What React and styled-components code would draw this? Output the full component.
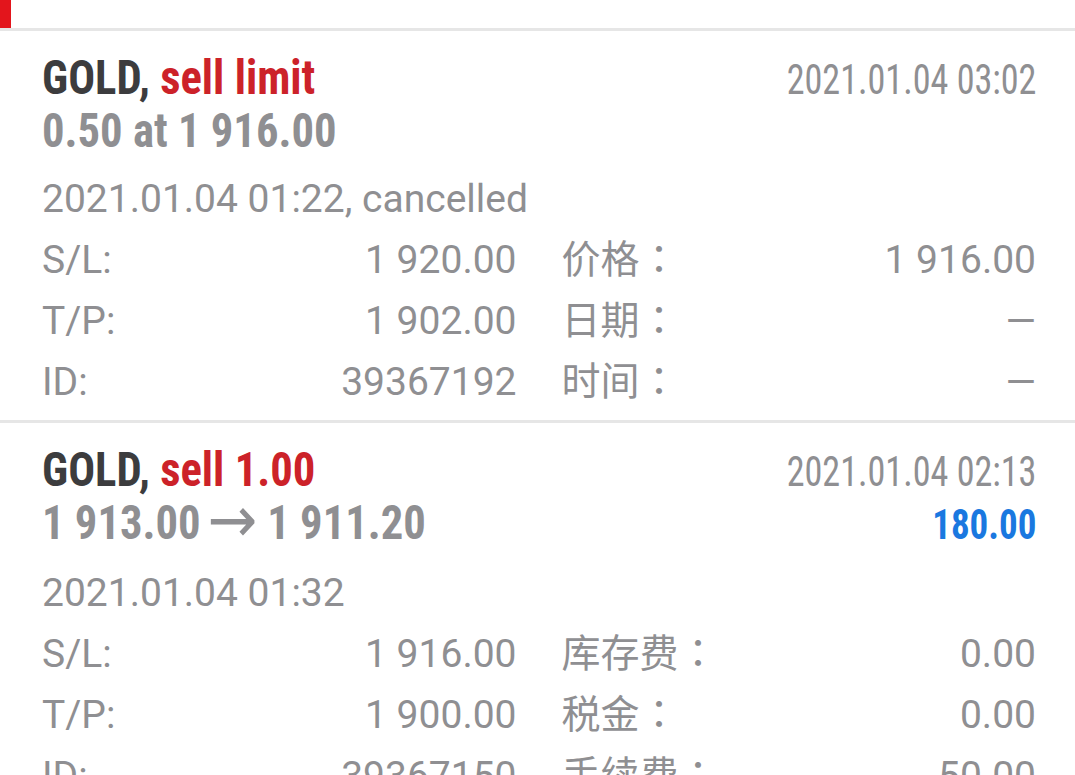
import React from 'react';
import styled, { createGlobalStyle } from 'styled-components';

const GlobalStyle = createGlobalStyle`
  html, body {
    margin: 0;
    padding: 0;
    background: #ffffff;
  }
  body {
    font-family: Roboto, "Noto Sans CJK SC", sans-serif;
    -webkit-font-smoothing: antialiased;
  }
`;

const GREY = '#8f8f92';

const Page = styled.div`
  width: 1075px;
  height: 775px;
  overflow: hidden;
  background: #fff;
`;

const TabStrip = styled.div`
  height: 28px;
  border-bottom: 3px solid #e6e6e6;
  display: flex;
`;

const TabIndicator = styled.div`
  width: 11px;
  background: #e3151c;
`;

const Card = styled.section`
  padding: 21px 39px 7px 42px;
  border-bottom: 3px solid #e6e6e6;
`;

const HeadRow = styled.div`
  display: flex;
  justify-content: space-between;
  align-items: baseline;
  line-height: 51px;
  white-space: nowrap;
`;

// the app's condensed face is narrower than Roboto Condensed, squeeze it a bit
const Condensed = styled.span`
  display: inline-block;
  font-family: "Roboto Condensed", Roboto, sans-serif;
  transform: scaleX(${(p) => p.$squeeze || 1});
  transform-origin: ${(p) => (p.$alignRight ? 'right' : 'left')} center;
`;

const Title = styled(Condensed).attrs({ $squeeze: 0.93 })`
  font-size: 48px;
  font-weight: 700;
  color: #3c3c3e;
`;

const Side = styled.span`
  color: #cc2229;
`;

const Price = styled(Condensed).attrs({ $squeeze: 0.93 })`
  font-size: 48px;
  font-weight: 700;
  color: ${GREY};
`;

const Arrow = styled.span`
  font-family: "DejaVu Sans", sans-serif;
  font-weight: 400;
  font-size: 64px;
  line-height: 0;
  margin: 0 11px 0 7px;
  vertical-align: -3px;
`;

const Stamp = styled(Condensed).attrs({ $squeeze: 0.86, $alignRight: true })`
  font-size: 42px;
  font-weight: 400;
  color: ${GREY};
`;

const Profit = styled(Condensed).attrs({ $squeeze: 0.88, $alignRight: true })`
  font-size: 42px;
  font-weight: 700;
  color: ${(p) => (p.$negative ? '#cc2229' : '#1a78e0')};
`;

const OpenTime = styled.div`
  margin-top: 13px;
  font-size: 39px;
  line-height: 61px;
  color: ${GREY};
`;

const Details = styled.div`
  display: grid;
  grid-template-columns: 1fr 1fr;
  grid-auto-rows: 61px;
  column-gap: 45px;
  font-size: 39px;
  line-height: 61px;
  color: ${GREY};
`;

const Cell = styled.div`
  display: flex;
  justify-content: space-between;
  white-space: nowrap;
`;

const Label = styled.span`
  font-family: Roboto, "Noto Sans CJK SC", sans-serif;
`;

// full-width colon, centred in its box as on the device
const Colon = styled.span`
  font-family: "Noto Sans CJK TC", "Noto Sans CJK SC", sans-serif;
  line-height: 0;
`;

const Value = styled.span``;

const orders = [
  {
    symbol: 'GOLD',
    side: 'sell limit',
    price: ['0.50 at 1 916.00'],
    stamp: '2021.01.04 03:02',
    open: '2021.01.04 01:22, cancelled',
    rows: [
      ['S/L:', '1 920.00', '价格', '1 916.00'],
      ['T/P:', '1 902.00', '日期', '—'],
      ['ID:', '39367192', '时间', '—'],
    ],
  },
  {
    symbol: 'GOLD',
    side: 'sell 1.00',
    price: ['1 913.00', '1 911.20'],
    stamp: '2021.01.04 02:13',
    profit: '180.00',
    open: '2021.01.04 01:32',
    rows: [
      ['S/L:', '1 916.00', '库存费', '0.00'],
      ['T/P:', '1 900.00', '税金', '0.00'],
      ['ID:', '39367150', '手续费', '-50.00'],
    ],
  },
];

const OrderCard = ({ order }) => (
  <Card>
    <HeadRow>
      <Title>
        {order.symbol}, <Side>{order.side}</Side>
      </Title>
      <Stamp>{order.stamp}</Stamp>
    </HeadRow>
    <HeadRow>
      <Price>
        {order.price[0]}
        {order.price[1] && (
          <>
            <Arrow>→</Arrow>
            {order.price[1]}
          </>
        )}
      </Price>
      {order.profit && <Profit>{order.profit}</Profit>}
    </HeadRow>
    <OpenTime>{order.open}</OpenTime>
    <Details>
      {order.rows.map(([l1, v1, l2, v2]) => (
        <React.Fragment key={l1}>
          <Cell>
            <Label>{l1}</Label>
            <Value>{v1}</Value>
          </Cell>
          <Cell>
            <Label>
              {l2}
              <Colon>：</Colon>
            </Label>
            <Value>{v2}</Value>
          </Cell>
        </React.Fragment>
      ))}
    </Details>
  </Card>
);

export default function App() {
  return (
    <Page>
      <GlobalStyle />
      <TabStrip>
        <TabIndicator />
      </TabStrip>
      {orders.map((o) => (
        <OrderCard key={o.stamp} order={o} />
      ))}
    </Page>
  );
}
